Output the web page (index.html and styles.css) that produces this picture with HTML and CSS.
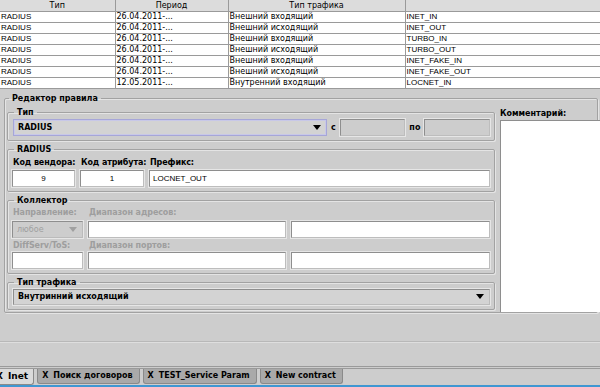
FILE: index.html
```html
<!DOCTYPE html>
<html>
<head>
  <meta charset="utf-8">
  <title>Inet</title>
  <link rel="stylesheet" href="styles.css">
</head>
<body>
  <div id="app">
    <table class="grid">
      <colgroup>
        <col style="width:115px"><col style="width:113px"><col style="width:177px"><col>
      </colgroup>
      <thead>
        <tr><th>Тип</th><th>Период</th><th>Тип трафика</th><th></th></tr>
      </thead>
      <tbody>
        <tr><td class="lat">RADIUS</td><td>26.04.2011-...</td><td>Внешний входящий</td><td class="lat">INET_IN</td></tr>
        <tr><td class="lat">RADIUS</td><td>26.04.2011-...</td><td>Внешний исходящий</td><td class="lat">INET_OUT</td></tr>
        <tr><td class="lat">RADIUS</td><td>26.04.2011-...</td><td>Внешний входящий</td><td class="lat">TURBO_IN</td></tr>
        <tr><td class="lat">RADIUS</td><td>26.04.2011-...</td><td>Внешний исходящий</td><td class="lat">TURBO_OUT</td></tr>
        <tr><td class="lat">RADIUS</td><td>26.04.2011-...</td><td>Внешний входящий</td><td class="lat">INET_FAKE_IN</td></tr>
        <tr><td class="lat">RADIUS</td><td>26.04.2011-...</td><td>Внешний исходящий</td><td class="lat">INET_FAKE_OUT</td></tr>
        <tr><td class="lat">RADIUS</td><td>12.05.2011-...</td><td>Внутренний входящий</td><td class="lat">LOCNET_IN</td></tr>
      </tbody>
    </table>

    <fieldset class="editor">
      <legend>Редактор правила</legend>
      <div class="editor-body">
        <div class="editor-left">

          <fieldset class="group">
            <legend>Тип</legend>
            <div class="row">
              <div class="combo combo-focus type-combo"><span>RADIUS</span><span class="arrow"></span></div>
              <span class="inline-label">с</span>
              <div class="field field-off w-date"></div>
              <span class="inline-label">по</span>
              <div class="field field-off w-date"></div>
            </div>
          </fieldset>

          <fieldset class="group">
            <legend>RADIUS</legend>
            <div class="row labels">
              <span class="w-vendor">Код вендора:</span>
              <span class="w-attr">Код атрибута:</span>
              <span>Префикс:</span>
            </div>
            <div class="row">
              <div class="field w-vendor num">9</div>
              <div class="field w-attr num">1</div>
              <div class="field grow">LOCNET_OUT</div>
            </div>
          </fieldset>

          <fieldset class="group">
            <legend>Коллектор</legend>
            <div class="row labels off">
              <span class="w-dir">Направление:</span>
              <span>Диапазон адресов:</span>
            </div>
            <div class="row">
              <div class="combo combo-off w-dir"><span>любое</span><span class="arrow"></span></div>
              <div class="field w-range"></div>
              <div class="field grow"></div>
            </div>
            <div class="row labels off second">
              <span class="w-dir">DiffServ/ToS:</span>
              <span>Диапазон портов:</span>
            </div>
            <div class="row">
              <div class="field w-dir"></div>
              <div class="field w-range"></div>
              <div class="field grow"></div>
            </div>
          </fieldset>

          <fieldset class="group">
            <legend>Тип трафика</legend>
            <div class="row">
              <div class="combo grow traffic-combo"><span>Внутринний исходящий</span><span class="arrow"></span></div>
            </div>
          </fieldset>

        </div>
        <div class="comment">
          <div class="comment-label">Комментарий:</div>
          <div class="comment-box"></div>
        </div>
      </div>
    </fieldset>

    <div class="filler"></div>
    <div class="separator"></div>

    <div class="tabs">
      <div class="tab active"><span class="x">X</span>Inet</div>
      <div class="tab"><span class="x">X</span>Поиск договоров</div>
      <div class="tab"><span class="x">X</span>TEST_Service Param</div>
      <div class="tab"><span class="x">X</span>New contract</div>
    </div>
    <div class="status-line"></div>
  </div>
</body>
</html>
```

FILE: styles.css
```css
/* form editor window */
* {
  box-sizing: border-box;
}

body {
  margin: 0;
  background-color: #cdcdcd;
  font-family: "DejaVu Sans", sans-serif;
  font-size: 8px;
  color: #000;
}

#app {
  width: 600px;
  height: 387px;
  display: flex;
  flex-direction: column;
  overflow: hidden;
}

/* rules table */
.grid {
  width: 600px;
  border-collapse: collapse;
  table-layout: fixed;
  background-color: #fff;
}

.grid th,
.grid td {
  height: 11px;
  padding: 0 1px;
  border: 1px solid #9a9a9a;
  line-height: 9px;
  font-size: 8px;
  white-space: nowrap;
  overflow: hidden;
}

.grid th {
  font-weight: normal;
  background-color: #dcdcdc;
  border-top: none;
}

.grid td {
  text-align: left;
}

.grid td.lat {
  font-family: "Liberation Sans", Arial, sans-serif;
}

.grid th:first-child,
.grid td:first-child {
  border-left: none;
}

.grid th:last-child,
.grid td:last-child {
  border-right: none;
}

/* editor fieldsets */
fieldset {
  margin: 0;
  min-width: 0;
  border: 1px solid #a2a2a2;
  border-radius: 2px;
  box-shadow: 1px 1px 0 #e4e4e4, inset 1px 1px 0 #e4e4e4;
}

legend {
  padding: 0 3px;
  margin-left: 2px;
  height: 10px;
  line-height: 10px;
  font-weight: bold;
  font-size: 8px;
}

.editor {
  margin: 5px 2px 0 4px;
  padding: 4px 0 0 2px;
}

.editor-body {
  display: flex;
  gap: 5px;
}

.editor-left {
  width: 488px;
  display: flex;
  flex-direction: column;
  gap: 4px;
}

.group {
  padding: 1px 4px 4px 4px;
}

.row {
  display: flex;
  align-items: center;
  gap: 5px;
}

.labels {
  font-weight: bold;
  height: 10px;
  line-height: 10px;
  margin: 2px 0 2px 1px;
  white-space: nowrap;
  letter-spacing: -0.1px;
}

.labels span {
  flex-shrink: 0;
}

.labels.off {
  color: #9e9e9e;
  margin: 1px 0 3px 1px;
}

.labels.second {
  margin: 3px 0 1px 1px;
}

.inline-label {
  font-weight: bold;
  margin: 0 -1px;
}

/* inputs */
.field {
  height: 17px;
  background-color: #fff;
  border: 1px solid #8e8e8e;
  border-right-color: #bdbdbd;
  border-bottom-color: #bdbdbd;
  box-shadow: 0 0 0 1px #e6e6e6;
  line-height: 15px;
  padding: 0 3px;
  font-family: "Liberation Sans", Arial, sans-serif;
  font-size: 8px;
}

.field.num {
  text-align: center;
}

.field-off {
  background-color: #cdcdcd;
}

.grow {
  flex: 1;
}

.w-vendor {
  width: 63px;
}

.w-attr {
  width: 64px;
}

.w-dir {
  width: 71px;
}

.w-range {
  width: 198px;
}

.w-date {
  width: 66px;
}

.combo {
  height: 17px;
  display: flex;
  align-items: center;
  justify-content: space-between;
  padding: 0 4px;
  background-color: #d3d3d3;
  border: 1px solid #8e8e8e;
  border-right-color: #bbb;
  border-bottom-color: #bbb;
  box-shadow: 0 0 0 1px #e6e6e6;
  font-weight: bold;
}

.combo-focus {
  border: 1px solid #a6a6d8;
  box-shadow: inset 0 0 0 1px #c8c8e8;
}

.type-combo {
  width: 316px;
  margin-left: 1px;
}

.traffic-combo {
  height: 16px;
  margin-left: 1px;
}

.combo-off {
  color: #a0a0a0;
  font-weight: normal;
  background-color: #cdcdcd;
}

.arrow {
  width: 0;
  height: 0;
  border-left: 4px solid transparent;
  border-right: 4px solid transparent;
  border-top: 5px solid #000;
  margin-right: 1px;
}

.combo-off .arrow {
  border-top-color: #a0a0a0;
}

/* comment */
.comment {
  flex: 1;
  display: flex;
  flex-direction: column;
  margin-right: -3px;
}

.comment-label {
  font-weight: bold;
  height: 11px;
  line-height: 10px;
  margin-top: 1px;
}

.comment-box {
  height: 192px;
  background-color: #fff;
  border-left: 1px solid #8e8e8e;
  border-top: 1px solid #8e8e8e;
}

/* bottom area */
.filler {
  height: 29px;
  flex-shrink: 0;
  border-bottom: 1px solid #b8b8b8;
}

.separator {
  height: 27px;
  flex-shrink: 0;
  border-top: 1px solid #dedede;
  border-bottom: 3px double #9a9a9a;
}

.tabs {
  display: flex;
  gap: 3px;
  height: 16px;
  flex-shrink: 0;
}

.tab {
  height: 15px;
  line-height: 14px;
  padding: 0 6px 0 4px;
  font-weight: bold;
  font-size: 8px;
  background-color: #a9a9a9;
  border: 1px solid #8a8a8a;
  border-top: none;
  border-radius: 0 0 3px 3px;
  white-space: nowrap;
}

.tab .x {
  margin-right: 5px;
}

.tab.active {
  margin-left: -9px;
  height: 16px;
  background-color: #dadada;
  font-size: 9px;
  padding-right: 5px;
}

.status-line {
  height: 2px;
  flex-shrink: 0;
  margin-top: auto;
  background-color: #3f97d2;
}
```
